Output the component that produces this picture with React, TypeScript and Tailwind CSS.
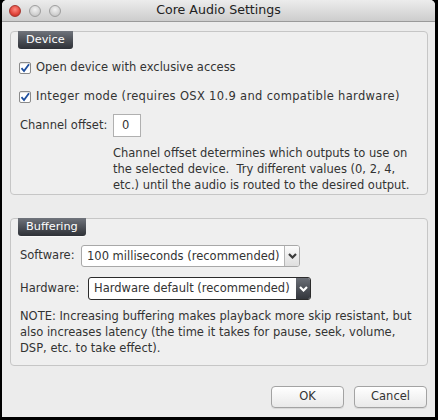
import React from "react";

const font = { fontFamily: '"DejaVu Sans", "Liberation Sans", sans-serif' };

function Check() {
  return (
    <div className="w-[12px] h-[12px] bg-white border border-[#8a8a8a] rounded-[2px] flex items-center justify-center shadow-[inset_0_1px_1px_rgba(0,0,0,0.12)]">
      <svg width="10" height="10" viewBox="0 0 10 10">
        <path d="M1.5 5.2 L4 8 L9 1.2" fill="none" stroke="#1f4f9e" strokeWidth="1.8" strokeLinejoin="miter" />
      </svg>
    </div>
  );
}

function Chevron({ color }: { color: string }) {
  return (
    <svg width="9" height="6" viewBox="0 0 9 6">
      <path d="M1 1 L4.5 4.5 L8 1" fill="none" stroke={color} strokeWidth="2.2" />
    </svg>
  );
}

function Tab({ label, w }: { label: string; w: string }) {
  return (
    <div
      className={`${w} h-[18px] -mt-[1px] ml-[7px] rounded-b-[3px] bg-gradient-to-b from-[#70747c] to-[#2e3137] text-white text-[11.3px] leading-[18px] pl-[8px] shadow-[0_1px_0_rgba(255,255,255,0.6)]`}
    >
      {label}
    </div>
  );
}

export default function App() {
  return (
    <div className="w-[438px] h-[420px] bg-black pl-[2px] pr-[3px] pb-[3px] flex text-[#333] text-[11.5px]" style={font}>
      <div className="flex-1 flex flex-col bg-[#ececec] rounded-t-[5px] overflow-hidden">
        {/* title bar */}
        <div className="h-[22px] relative flex items-center bg-gradient-to-b from-[#ececec] to-[#cdcdcd] border-b border-[#9a9a9a]">
          <div className="flex gap-[8px] pl-[7px]">
            <div className="w-[12px] h-[12px] rounded-full bg-[radial-gradient(circle_at_50%_35%,#ff8a80,#e0443a_60%,#b3261e)] border border-[#a6352e]" />
            <div className="w-[12px] h-[12px] rounded-full bg-[radial-gradient(circle_at_50%_35%,#f2f2f2,#d2d2d2_60%,#b8b8b8)] border border-[#9e9e9e]" />
            <div className="w-[12px] h-[12px] rounded-full bg-[radial-gradient(circle_at_50%_35%,#f2f2f2,#d2d2d2_60%,#b8b8b8)] border border-[#9e9e9e]" />
          </div>
          <div className="absolute inset-0 flex items-center justify-center text-[12.6px] text-[#222]">
            Core Audio Settings
          </div>
        </div>

        {/* body */}
        <div className="flex flex-col pl-[8px] pr-[7px] pt-[9px]">
          {/* Device box */}
          <div className="h-[164px] border border-[#c6c6c6] rounded-[4px] bg-[#efefef] flex flex-col">
            <Tab label="Device" w="w-[55px]" />
            <div className="mt-[10px] h-[18px] flex items-center pl-[8px] gap-[5px]">
              <Check />
              <span>Open device with exclusive access</span>
            </div>
            <div className="mt-[11px] h-[18px] flex items-center pl-[8px] gap-[5px]">
              <Check />
              <span className="tracking-[0.33px]">Integer mode (requires OSX 10.9 and compatible hardware)</span>
            </div>
            <div className="mt-[8px] h-[23px] flex items-center pl-[9px]">
              <span className="w-[93px]">Channel offset:</span>
              <div className="w-[28px] h-[23px] bg-white border border-[#b0b0b0] pl-[8px] leading-[21px]">0</div>
            </div>
            <div className="mt-[8px] ml-[102px] leading-[16px] whitespace-nowrap">
              Channel offset determines which outputs to use on
              <br />
              the selected device.&nbsp; Try different values (0, 2, 4,
              <br />
              etc.) until the audio is routed to the desired output.
            </div>
          </div>

          {/* Buffering box */}
          <div className="mt-[23px] h-[148px] border border-[#c6c6c6] rounded-[4px] bg-[#efefef] flex flex-col">
            <Tab label="Buffering" w="w-[68px]" />
            <div className="mt-[9px] h-[22px] flex items-center pl-[9px]">
              <span className="w-[61px]">Software:</span>
              <div className="w-[219px] h-[22px] flex bg-white border border-[#a8a8a8] rounded-[3px] overflow-hidden">
                <div className="flex-1 pl-[5px] leading-[20px] whitespace-nowrap">100 milliseconds (recommended)</div>
                <div className="w-[15px] border-l border-[#b5b5b5] bg-gradient-to-b from-[#fbfbfb] to-[#dedede] flex items-center justify-center">
                  <Chevron color="#3a3a3a" />
                </div>
              </div>
            </div>
            <div className="mt-[10px] h-[23px] flex items-center pl-[9px]">
              <span className="w-[68px]">Hardware:</span>
              <div className="w-[223px] h-[23px] flex bg-white border border-[#2c2c2c] rounded-[3px] overflow-hidden">
                <div className="flex-1 pl-[5px] leading-[21px] whitespace-nowrap">Hardware default (recommended)</div>
                <div className="w-[14px] bg-gradient-to-b from-[#6b6f77] to-[#33363c] flex items-center justify-center">
                  <Chevron color="#ffffff" />
                </div>
              </div>
            </div>
            <div className="mt-[8px] pl-[9px] leading-[16px] whitespace-nowrap">
              NOTE: Increasing buffering makes playback more skip resistant, but
              <br />
              also increases latency (the time it takes for pause, seek, volume,
              <br />
              DSP, etc. to take effect).
            </div>
          </div>

          {/* Buttons */}
          <div className="mt-[20px] flex justify-end gap-[10px] pr-[1px]">
            <div className="w-[73px] h-[22px] rounded-[4px] border border-[#a3a3a3] bg-gradient-to-b from-[#ffffff] to-[#e9e9e9] flex items-center justify-center shadow-[0_1px_0_rgba(0,0,0,0.08)]">
              OK
            </div>
            <div className="w-[73px] h-[22px] rounded-[4px] border border-[#a3a3a3] bg-gradient-to-b from-[#ffffff] to-[#e9e9e9] flex items-center justify-center shadow-[0_1px_0_rgba(0,0,0,0.08)]">
              Cancel
            </div>
          </div>
        </div>
      </div>
    </div>
  );
}
